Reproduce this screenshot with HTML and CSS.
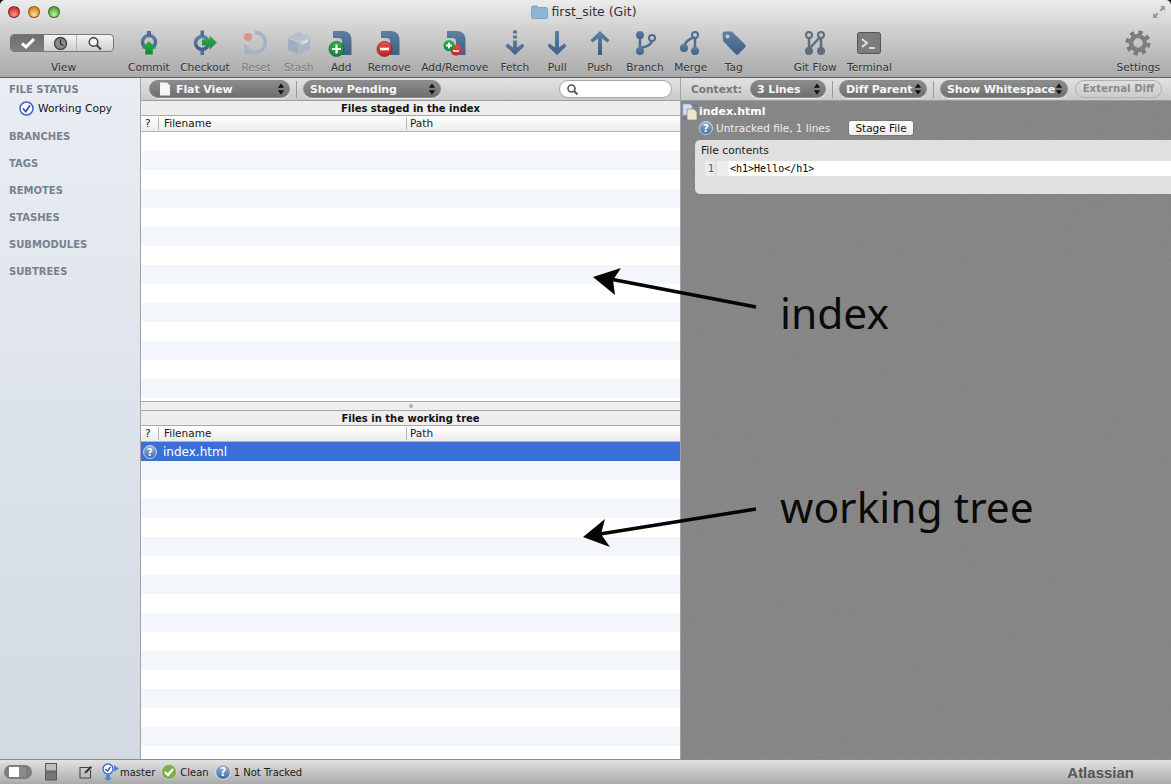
FILE: index.html
```html
<!DOCTYPE html>
<html lang="en">
<head>
  <meta charset="UTF-8">
  <title>first_site (Git)</title>
  <link rel="stylesheet" href="styles.css">
</head>
<body>
  <svg class="defs" width="0" height="0">
    <defs>
      <linearGradient id="slate" x1="0" y1="0" x2="0" y2="1">
        <stop offset="0" stop-color="#5f7fa3"/><stop offset="1" stop-color="#3f5f84"/>
      </linearGradient>
      <linearGradient id="green" x1="0" y1="0" x2="0" y2="1">
        <stop offset="0" stop-color="#2eb04c"/><stop offset="1" stop-color="#0f8a30"/>
      </linearGradient>
      <linearGradient id="red" x1="0" y1="0" x2="0" y2="1">
        <stop offset="0" stop-color="#e8534a"/><stop offset="1" stop-color="#c4201c"/>
      </linearGradient>
      <linearGradient id="badge" x1="0" y1="0" x2="0" y2="1">
        <stop offset="0" stop-color="#9db6d8"/><stop offset="1" stop-color="#3c69a8"/>
      </linearGradient>
      <filter id="grain">
        <feTurbulence type="fractalNoise" baseFrequency="0.9" numOctaves="2"/>
        <feColorMatrix type="saturate" values="0"/>
      </filter>
      <symbol id="updown" viewBox="0 0 8 12">
        <path d="M4 0.5 7.2 4.8H.8zM4 11.5.8 7.2H7.2z" fill="#111"/>
      </symbol>
      <symbol id="question" viewBox="0 0 14 14">
        <circle cx="7" cy="7" r="6.5" fill="url(#badge)" stroke="#dfe6f0" stroke-width="0.8"/>
        <text x="7" y="10.6" text-anchor="middle" font-family="DejaVu Sans" font-weight="700" font-size="10" fill="#fff">?</text>
      </symbol>
      <symbol id="doc" viewBox="0 0 28 28">
        <path d="M6 2H17Q24 3 24.500 10V26H15V12Q15 9 11 9H6z" fill="url(#slate)"/>
      </symbol>
    </defs>
  </svg>

  <div class="window">
    <header class="top">
      <div class="titlebar">
        <div class="lights">
          <span class="light light-red"></span>
          <span class="light light-amber"></span>
          <span class="light light-green"></span>
        </div>
        <div class="title">
          <svg width="17" height="14" viewBox="0 0 17 14"><path d="M.5 2.500Q.5 1 2 1H6L7.500 2.500H15Q16.500 2.500 16.500 4V12.500Q16.500 13.500 15 13.500H2Q.5 13.500.5 12.500z" fill="#8db6d6" stroke="#6d93b3" stroke-width=".7"/></svg>
          first_site (Git)
        </div>
        <svg class="fullscreen" width="14" height="14" viewBox="0 0 14 14"><path d="M8 1H13V6L11.300 4.300 9 6.500 7.500 5 9.700 2.700zM6 13H1V8L2.700 9.700 5 7.500 6.500 9 4.300 11.300z" fill="#9a9a9a"/></svg>
      </div>

      <div class="toolbar">
        <div class="view-tool">
          <div class="segmented">
            <span class="seg seg-on">
              <svg width="18" height="14" viewBox="0 0 18 14"><path d="M3 7.500 7 11 15 3" fill="none" stroke="#fff" stroke-width="3"/></svg>
            </span>
            <span class="seg seg-clock">
              <svg width="15" height="15" viewBox="0 0 15 15"><circle cx="7.500" cy="7.500" r="6" fill="#8a8a8a" stroke="#444" stroke-width="1.400"/><path d="M7.500 3.500V8L10.500 9.500" fill="none" stroke="#333" stroke-width="1.200"/></svg>
            </span>
            <span class="seg seg-search">
              <svg width="16" height="15" viewBox="0 0 16 15"><circle cx="6.500" cy="6" r="4.300" fill="#f4f4f4" stroke="#444" stroke-width="1.500"/><path d="M9.700 9.300 14 13.500" stroke="#444" stroke-width="2.200"/></svg>
            </span>
          </div>
          <span class="tool-label">View</span>
        </div>

        <div class="tool-group">
          <div class="tool">
            <svg class="icon" viewBox="0 0 28 28"><circle cx="14" cy="13" r="6.500" fill="none" stroke="url(#slate)" stroke-width="3.500"/><rect x="12" y="2" width="4" height="6" fill="#4f6f92"/><path d="M14 12 21.500 19.500H17.800V25.500H10.200V19.500H6.500z" fill="url(#green)"/></svg>
            <span class="tool-label">Commit</span>
          </div>
          <div class="tool">
            <svg class="icon" viewBox="0 0 28 28"><circle cx="11" cy="14" r="6.500" fill="none" stroke="url(#slate)" stroke-width="3.500"/><rect x="9.500" y="1.500" width="3.500" height="6" fill="#4f6f92"/><rect x="9.500" y="20.500" width="3.500" height="5.500" fill="#4f6f92"/><path d="M26 13.500 18.500 6.500V10.500H11V16.500H18.500V20.500z" fill="url(#green)"/></svg>
            <span class="tool-label">Checkout</span>
          </div>
          <div class="tool tool-off">
            <svg class="icon" viewBox="0 0 28 28"><path d="M13 3.500A10 10 0 1 1 8 22" fill="none" stroke="#a3b3c4" stroke-width="3.500"/><path d="M2.500 14.500 13 25H2.500z" fill="#a3b3c4"/><circle cx="6" cy="8" r="4" fill="#e08f8c"/></svg>
            <span class="tool-label">Reset</span>
          </div>
          <div class="tool tool-off">
            <svg class="icon" viewBox="0 0 28 28"><path d="M14 3 25 8 14 12.500 3 8z" fill="#b4c1cf"/><path d="M3 9.500 13.500 14V25.500L3 21z" fill="#9eaebf"/><path d="M14.500 14 25 9.500V21L14.500 25.500z" fill="#a8b7c7"/><path d="M16 13 23 10V13L16 16z" fill="#d6dde5"/></svg>
            <span class="tool-label">Stash</span>
          </div>
          <div class="tool">
            <svg class="icon" viewBox="0 0 28 28"><use href="#doc"/><circle cx="9.500" cy="20" r="7.500" fill="url(#green)" stroke="#0a5c20" stroke-width=".7"/><path d="M9.500 15.500V24.500M5 20H14" stroke="#fff" stroke-width="2.200"/></svg>
            <span class="tool-label">Add</span>
          </div>
          <div class="tool">
            <svg class="icon" viewBox="0 0 28 28"><use href="#doc"/><circle cx="9.500" cy="20" r="7.500" fill="url(#red)" stroke="#8a1512" stroke-width=".7"/><path d="M5 20H14" stroke="#fff" stroke-width="2.600"/></svg>
            <span class="tool-label">Remove</span>
          </div>
          <div class="tool">
            <svg class="icon" viewBox="0 0 28 28"><use href="#doc"/><circle cx="15" cy="21" r="5.500" fill="url(#red)"/><path d="M12 22H18" stroke="#fff" stroke-width="1.500"/><circle cx="8" cy="16.500" r="5.500" fill="url(#green)"/><path d="M8 13.500V19.500M5 16.500H11" stroke="#fff" stroke-width="1.800"/></svg>
            <span class="tool-label">Add/Remove</span>
          </div>
          <div class="tool">
            <svg class="icon" viewBox="0 0 28 28"><rect x="12" y="1.500" width="4" height="3" fill="#54749a"/><rect x="12" y="6.500" width="4" height="3" fill="#54749a"/><path d="M12 11.500H16V18.500L21.500 14.500 23.500 17 14 26 4.500 17 6.500 14.500 12 18.500z" fill="url(#slate)"/></svg>
            <span class="tool-label">Fetch</span>
          </div>
          <div class="tool">
            <svg class="icon" viewBox="0 0 28 28"><path d="M12 2H16V18.500L21.500 14.500 23.500 17 14 26 4.500 17 6.500 14.500 12 18.500z" fill="url(#slate)"/></svg>
            <span class="tool-label">Pull</span>
          </div>
          <div class="tool">
            <svg class="icon" viewBox="0 0 28 28"><path d="M12 26H16V9.500L21.500 13.500 23.500 11 14 2 4.500 11 6.500 13.500 12 9.500z" fill="url(#slate)"/></svg>
            <span class="tool-label">Push</span>
          </div>
          <div class="tool">
            <svg class="icon" viewBox="0 0 28 28"><path d="M9 6V21M9 19Q21 17 21 11" fill="none" stroke="#4c6c90" stroke-width="2.500"/><circle cx="9" cy="6" r="4" fill="url(#slate)"/><circle cx="9" cy="22" r="4" fill="url(#slate)"/><circle cx="21" cy="9" r="3" fill="#c9c9c9" stroke="#4c6c90" stroke-width="2"/></svg>
            <span class="tool-label">Branch</span>
          </div>
          <div class="tool">
            <svg class="icon" viewBox="0 0 28 28"><path d="M18 6V21M18 8Q8 11 7 18" fill="none" stroke="#4c6c90" stroke-width="2.500"/><circle cx="18" cy="6" r="3" fill="#c9c9c9" stroke="#4c6c90" stroke-width="2"/><circle cx="18" cy="22" r="4" fill="url(#slate)"/><circle cx="7" cy="19" r="4" fill="url(#slate)"/></svg>
            <span class="tool-label">Merge</span>
          </div>
          <div class="tool">
            <svg class="icon" viewBox="0 0 28 28"><path d="M2.500 5Q2.500 2.500 5 2.500H12L25.500 16 Q26 17 25.500 18L18 25.500Q17 26 16 25.500L3 12z" fill="url(#slate)"/><circle cx="7.500" cy="7.500" r="2" fill="#c8c8c8"/></svg>
            <span class="tool-label">Tag</span>
          </div>
        </div>

        <div class="tool-group tool-group-extra">
          <div class="tool">
            <svg class="icon" viewBox="0 0 28 28"><path d="M8 6V21M20 6V21M9 19 19 8" fill="none" stroke="#5f6d7a" stroke-width="2.500"/><circle cx="8" cy="6" r="3" fill="#c9c9c9" stroke="#5f6d7a" stroke-width="2"/><circle cx="20" cy="6" r="3" fill="#c9c9c9" stroke="#5f6d7a" stroke-width="2"/><circle cx="8" cy="22" r="4" fill="#5f6d7a"/><circle cx="20" cy="22" r="4" fill="#5f6d7a"/></svg>
            <span class="tool-label">Git Flow</span>
          </div>
          <div class="tool">
            <svg class="icon" viewBox="0 0 28 28"><rect x="2.500" y="3.500" width="23" height="21" rx="2" fill="#7c7c7c" stroke="#555"/><path d="M7 10 12 14 7 18" fill="none" stroke="#e6e6e6" stroke-width="1.800"/><path d="M14 19H20" stroke="#e6e6e6" stroke-width="1.800"/></svg>
            <span class="tool-label">Terminal</span>
          </div>
        </div>

        <div class="tool tool-settings">
          <svg class="icon" viewBox="0 0 28 28"><circle cx="14" cy="14" r="10.500" fill="none" stroke="#7a7a7a" stroke-width="4" stroke-dasharray="4.200 4.050"/><circle cx="14" cy="14" r="7" fill="none" stroke="#7e7e7e" stroke-width="4.500"/></svg>
          <span class="tool-label">Settings</span>
        </div>
      </div>
    </header>

    <div class="main">
      <nav class="sidebar">
        <div class="side-head">FILE STATUS</div>
        <div class="side-item">
          <svg width="15" height="15" viewBox="0 0 15 15"><circle cx="7.500" cy="7.500" r="6.500" fill="#fff" stroke="#3f62c8" stroke-width="1.500"/><path d="M4 7.500 6.800 10.500 11 4.500" fill="none" stroke="#2c4fb8" stroke-width="1.800"/></svg>
          Working Copy
        </div>
        <div class="side-head">BRANCHES</div>
        <div class="side-head">TAGS</div>
        <div class="side-head">REMOTES</div>
        <div class="side-head">STASHES</div>
        <div class="side-head">SUBMODULES</div>
        <div class="side-head">SUBTREES</div>
      </nav>

      <section class="files">
        <div class="bar">
          <div class="popup popup-flat">
            <svg width="12" height="14" viewBox="0 0 12 14"><path d="M1 .5H8L11 3.500V13.500H1z" fill="#f4f4f4"/></svg>
            <span class="popup-text">Flat View</span>
            <svg class="updown"><use href="#updown"/></svg>
          </div>
          <span class="bar-sep"></span>
          <div class="popup popup-pending">
            <span class="popup-text">Show Pending</span>
            <svg class="updown"><use href="#updown"/></svg>
          </div>
          <div class="search">
            <svg width="13" height="13" viewBox="0 0 13 13"><circle cx="5.500" cy="5.500" r="3.500" fill="none" stroke="#555" stroke-width="1.600"/><path d="M8 8 11.500 11.500" stroke="#555" stroke-width="2"/></svg>
          </div>
        </div>

        <div class="list list-index">
          <div class="list-title">Files staged in the index</div>
          <div class="cols">
            <span class="col col-q">?</span>
            <span class="col col-name">Filename</span>
            <span class="col col-path">Path</span>
          </div>
          <div class="rows"></div>
        </div>

        <div class="splitter"><span class="splitter-dot"></span></div>

        <div class="list list-tree">
          <div class="list-title">Files in the working tree</div>
          <div class="cols">
            <span class="col col-q">?</span>
            <span class="col col-name">Filename</span>
            <span class="col col-path">Path</span>
          </div>
          <div class="rows">
            <div class="row-selected">
              <svg width="14" height="14"><use href="#question"/></svg>
              index.html
            </div>
          </div>
        </div>
      </section>

      <section class="diff">
        <div class="bar bar-diff">
          <span class="context">Context:</span>
          <div class="popup popup-lines">
            <span class="popup-text">3 Lines</span>
            <svg class="updown"><use href="#updown"/></svg>
          </div>
          <span class="bar-sep"></span>
          <div class="popup popup-parent">
            <span class="popup-text">Diff Parent</span>
            <svg class="updown"><use href="#updown"/></svg>
          </div>
          <span class="bar-sep"></span>
          <div class="popup popup-white">
            <span class="popup-text">Show Whitespace</span>
            <svg class="updown"><use href="#updown"/></svg>
          </div>
          <span class="external">External Diff</span>
        </div>

        <div class="diff-body">
          <svg class="grain" width="100%" height="100%"><rect width="100%" height="100%" filter="url(#grain)"/></svg>
          <div class="file-name">
            <svg width="16" height="18" viewBox="0 0 16 18"><path d="M1 1H8L10 3V12H1z" fill="#cfe0f2" stroke="#8fb0d4" stroke-width=".7"/><path d="M5 6H12L15 9V17H5z" fill="#efe6d2" stroke="#8a7f68" stroke-width=".7"/><path d="M11 2H14V4M2 14V16H4" fill="none" stroke="#3b6ad0" stroke-width="1"/></svg>
            index.html
          </div>
          <div class="file-meta">
            <svg width="14" height="14"><use href="#question"/></svg>
            <span class="meta-text">Untracked file, 1 lines</span>
            <button class="stage">Stage File</button>
          </div>
          <div class="contents">
            <div class="contents-title">File contents</div>
            <div class="code-row">
              <span class="gutter">1</span>
              <span class="gutter gutter-empty"></span>
              <code class="code">&lt;h1&gt;Hello&lt;/h1&gt;</code>
            </div>
          </div>
        </div>
      </section>
    </div>

    <footer class="status">
      <span class="toggle"><span class="toggle-on"></span></span>
      <svg class="panes" width="12" height="18" viewBox="0 0 12 18"><rect x=".5" y=".5" width="11" height="7.500" fill="#bdbdbd" stroke="#555"/><rect x=".5" y="9" width="11" height="8" fill="#777" stroke="#555"/></svg>
      <svg class="compose" width="14" height="14" viewBox="0 0 14 14"><path d="M10 2.500H1V13H11.500V5" fill="none" stroke="#444" stroke-width="1.100"/><path d="M5.500 8.500 6 6.500 11.500 1 13 2.500 7.500 8z" fill="#333"/></svg>
      <svg class="branch-ico" width="18" height="18" viewBox="0 0 18 18"><path d="M13 2 18 5.500 13 9zM5 12H9V15H11L7 18 3 15H5z" fill="#3f8fd2"/><circle cx="7" cy="6" r="5" fill="#fff" stroke="#3f62c8" stroke-width="1.300"/><path d="M4.500 6 6.500 8 9.500 4" fill="none" stroke="#2c4fb8" stroke-width="1.400"/></svg>
      <span class="status-text">master</span>
      <svg class="status-ico" width="16" height="16" viewBox="0 0 16 16"><circle cx="8" cy="8" r="7.500" fill="#7fae4e" stroke="#dfe8d0" stroke-width=".6"/><path d="M4 8 7 11 12 5" fill="none" stroke="#fff" stroke-width="2.200"/></svg>
      <span class="status-text">Clean</span>
      <svg class="status-ico" width="16" height="16"><use href="#question"/></svg>
      <span class="status-text">1 Not Tracked</span>
      <span class="brand">Atlassian</span>
    </footer>

    <svg class="arrows" width="1171" height="784">
      <path d="M756 307 610 279" stroke="#050505" stroke-width="3.500"/>
      <path d="M593 277 621 268 613 280 615 295z" fill="#050505"/>
      <path d="M756 509 600 534" stroke="#050505" stroke-width="3.500"/>
      <path d="M583 537 605 519 601 534 610 547z" fill="#050505"/>
    </svg>
    <span class="note note-index">index</span>
    <span class="note note-tree">working tree</span>
  </div>
</body>
</html>
```

FILE: styles.css
```css
* {
  box-sizing: border-box;
}
html, body {
  margin: 0;
  height: 100%;
}
body {
  background: #111;
  font-family: "DejaVu Sans", sans-serif;
  font-size: 10.7px;
  color: #1a1a1a;
  overflow: hidden;
}
.defs {
  position: absolute;
}
.window {
  position: relative;
  width: 1171px;
  height: 784px;
  display: flex;
  flex-direction: column;
  border-radius: 5px 5px 0 0;
  overflow: hidden;
}

/* title bar and toolbar */
.top {
  height: 78px;
  flex: none;
  background: linear-gradient(#ececec, #d6d6d6 30%, #a9a9a9);
  border-bottom: 1px solid #5e5e5e;
}
.titlebar {
  height: 24px;
  display: grid;
  grid-template-columns: 1fr auto 1fr;
  align-items: center;
  padding: 0 5px 1px 8px;
}
.lights {
  display: flex;
  gap: 8px;
}
.light {
  width: 12px;
  height: 12px;
  border-radius: 50%;
  border: 1px solid rgba(0, 0, 0, 0.45);
}
.light-red {
  background: radial-gradient(circle at 50% 75%, #ff9a90, #d8312c 70%);
}
.light-amber {
  background: radial-gradient(circle at 50% 75%, #ffdf90, #d98c1e 70%);
}
.light-green {
  background: radial-gradient(circle at 50% 75%, #c4f0a0, #56a83a 70%);
}
.title {
  display: flex;
  align-items: center;
  gap: 3px;
  margin-right: 6px;
  font-size: 12.5px;
  color: #333;
}
.fullscreen {
  justify-self: end;
}
.toolbar {
  height: 53px;
  display: flex;
  padding: 5px 11px 0 10px;
}
.view-tool {
  width: 104px;
  margin-right: 14px;
  display: flex;
  flex-direction: column;
  align-items: center;
}
.view-tool .tool-label {
  padding-left: 3px;
}
.segmented {
  width: 104px;
  height: 18px;
  margin-top: 5px;
  margin-bottom: 9px;
  display: flex;
  border: 1px solid #777;
  border-radius: 4px;
  background: linear-gradient(#f4f4f4, #cfcfcf);
  overflow: hidden;
}
.seg {
  display: flex;
  align-items: center;
  justify-content: center;
}
.seg-on {
  width: 33px;
  background: linear-gradient(#6e6e6e, #7f7f7f);
}
.seg-clock {
  width: 33px;
  border-right: 1px solid #b0b0b0;
}
.seg-search {
  flex: 1;
}
.tool-group {
  display: flex;
  gap: 10.5px;
}
.tool-group-extra {
  margin-left: 44px;
}
.tool {
  min-width: 32px;
  display: flex;
  flex-direction: column;
  align-items: center;
}
.icon {
  width: 28px;
  height: 28px;
  margin-bottom: 4px;
}
.tool-label {
  font-size: 10.6px;
  line-height: 12px;
  color: #333;
  white-space: nowrap;
  text-shadow: 0 1px 0 rgba(255, 255, 255, 0.3);
}
.tool-off .tool-label {
  color: #7a7a7a;
}
.tool-settings {
  margin-left: auto;
}

/* main area */
.main {
  flex: 1;
  display: flex;
  min-height: 0;
}
.sidebar {
  width: 141px;
  flex: none;
  padding-top: 5px;
  background: linear-gradient(#e9edf3, #d2d9e2);
  border-right: 1px solid #a2a2a2;
}
.side-head {
  height: 27px;
  padding-left: 9px;
  line-height: 14px;
  font-size: 10px;
  font-weight: 700;
  color: #76818f;
}
.side-head:first-child {
  height: 19px;
}
.side-item {
  height: 29px;
  margin-top: -1px;
  padding-left: 19px;
  display: flex;
  align-items: flex-start;
  gap: 4px;
  line-height: 15px;
  color: #111;
}
.files {
  width: 540px;
  flex: none;
  display: flex;
  flex-direction: column;
  border-right: 1px solid #a2a2a2;
}
.bar {
  height: 23px;
  flex: none;
  display: flex;
  align-items: center;
  padding: 1px 8px;
  background: linear-gradient(#e2e2e2, #c9c9c9);
  border-bottom: 1px solid #9c9c9c;
}
.popup {
  height: 18px;
  display: flex;
  align-items: center;
  padding: 0 4px 0 6px;
  border-radius: 9px;
  background: linear-gradient(#8c8c8c, #6f6f6f);
  border: 1px solid #8a8a8a;
  box-shadow: 0 1px 0 #eee;
}
.popup-text {
  flex: 1;
  font-size: 11px;
  font-weight: 700;
  letter-spacing: -0.1px;
  color: #f6f6f6;
  white-space: nowrap;
}
.updown {
  width: 8px;
  height: 12px;
  flex: none;
}
.popup-flat {
  width: 141px;
  padding-left: 9px;
  gap: 5px;
}
.popup-pending {
  width: 138px;
}
.bar-sep {
  width: 1px;
  height: 17px;
  margin: 0 6px;
  background: #9a9a9a;
}
.search {
  width: 113px;
  height: 18px;
  margin-left: auto;
  padding-left: 6px;
  display: flex;
  align-items: center;
  background: #fff;
  border: 1px solid #a6a6a6;
  border-radius: 9px;
}
.list {
  display: flex;
  flex-direction: column;
  min-height: 0;
}
.list-index {
  height: 300px;
}
.list-tree {
  flex: 1;
}
.list-title {
  height: 15px;
  flex: none;
  text-align: center;
  font-size: 10px;
  font-weight: 700;
  line-height: 16px;
  color: #111;
  background: #eeeeee;
  border-bottom: 1px solid #a9a9a9;
}
.cols {
  height: 16px;
  flex: none;
  display: flex;
  align-items: center;
  background: linear-gradient(#ffffff, #ececec);
  border-bottom: 1px solid #b5b5b5;
}
.col {
  height: 13px;
  font-size: 10.5px;
  line-height: 13px;
}
.col-q {
  width: 18px;
  padding-left: 4px;
  border-right: 1px solid #b9b9b9;
}
.col-name {
  width: 248px;
  padding-left: 5px;
  border-right: 1px solid #b9b9b9;
}
.col-path {
  padding-left: 3px;
}
.rows {
  flex: 1;
  background: repeating-linear-gradient(#fff 0, #fff 19px, #f3f6fb 19px, #f3f6fb 38px);
}
.row-selected {
  height: 19px;
  display: flex;
  align-items: center;
  gap: 6px;
  padding-left: 2px;
  font-size: 12px;
  color: #fff;
  background: #3a70d6;
}
.splitter {
  height: 10px;
  flex: none;
  display: flex;
  align-items: center;
  justify-content: center;
  background: #efefef;
  border-top: 1px solid #a9a9a9;
  border-bottom: 1px solid #a9a9a9;
}
.splitter-dot {
  width: 4px;
  height: 4px;
  border-radius: 50%;
  background: #c2c2c2;
  border: 1px solid #aaa;
}

/* diff pane */
.diff {
  flex: 1;
  display: flex;
  flex-direction: column;
  min-width: 0;
}
.bar-diff {
  padding-left: 10px;
}
.context {
  width: 51px;
  margin-right: 8px;
  font-size: 10.6px;
  font-weight: 700;
  color: #777;
}
.popup-lines {
  width: 76px;
}
.popup-parent {
  width: 88px;
}
.popup-white {
  width: 128px;
}
.external {
  width: 87px;
  height: 18px;
  margin-left: 7px;
  text-align: center;
  font-size: 10.2px;
  font-weight: 700;
  line-height: 16px;
  color: #8a8a8a;
  border: 1px solid #b0b0b0;
  border-radius: 9px;
  white-space: nowrap;
}
.diff-body {
  flex: 1;
  position: relative;
  background: #828282;
  overflow: hidden;
}
.grain {
  position: absolute;
  inset: 0;
  opacity: 0.16;
}
.file-name {
  position: relative;
  height: 17px;
  padding: 2px 0 0 1px;
  display: flex;
  gap: 1px;
  font-size: 11px;
  font-weight: 700;
  line-height: 17px;
  color: #fff;
}
.file-meta {
  position: relative;
  height: 20px;
  padding-left: 18px;
  display: flex;
  align-items: center;
  gap: 3px;
}
.meta-text {
  width: 129px;
  font-size: 10.5px;
  color: #eee;
}
.stage {
  width: 66px;
  height: 16px;
  padding: 0;
  font-family: inherit;
  font-size: 10.5px;
  color: #111;
  background: linear-gradient(#fff, #ececec);
  border: 1px solid #777;
  border-radius: 3px;
}
.contents {
  position: relative;
  height: 54px;
  margin: 2px 0 0 14px;
  background: #e0e0e0;
  border-radius: 5px 0 0 5px;
}
.contents-title {
  height: 21px;
  padding-left: 6px;
  font-size: 10.7px;
  line-height: 21px;
}
.code-row {
  height: 15px;
  display: flex;
  background: #fff;
  line-height: 15px;
}
.gutter {
  width: 13px;
  font-size: 10px;
  color: #555;
  background: #ececec;
}
.gutter:first-child {
  width: 19px;
  padding-left: 13px;
  background: linear-gradient(90deg, #e0e0e0 10px, #ececec 10px);
}
.gutter-empty {
  width: 14px;
  border-left: 3px solid #e0e0e0;
}
.code {
  margin-left: 2px;
  font-family: "DejaVu Sans Mono", monospace;
  font-size: 10px;
  color: #000;
}

/* status bar */
.status {
  height: 25px;
  flex: none;
  display: flex;
  align-items: center;
  padding: 0 37px 0 4px;
  background: linear-gradient(#e2e2e2, #aaaaaa);
  border-top: 1px solid #8a8a8a;
}
.toggle {
  width: 28px;
  height: 14px;
  margin-right: 13px;
  padding: 2px 5px;
  border-radius: 7px;
  background: #7d7d7d;
}
.toggle-on {
  display: block;
  width: 17px;
  height: 10px;
  background: linear-gradient(90deg, #fff 60%, #8b8b8b 60%);
}
.panes {
  margin-right: 22px;
}
.compose {
  margin-right: 8px;
}
.branch-ico {
  margin-right: 1px;
}
.status-ico {
  margin: 0 3px 0 6px;
}
.status-text {
  font-size: 10px;
  color: #1a1a1a;
}
.brand {
  margin-left: auto;
  font-family: "Liberation Sans", sans-serif;
  font-size: 15px;
  font-weight: 700;
  color: #555;
}

/* annotations drawn over the app */
.arrows {
  position: absolute;
  left: 0;
  top: 0;
  pointer-events: none;
}
.note {
  position: absolute;
  left: 780px;
  font-family: "Noto Sans", sans-serif;
  font-size: 42.5px;
  line-height: 50px;
  color: #0a0a0a;
  white-space: nowrap;
}
.note-index {
  top: 288px;
}
.note-tree {
  top: 482px;
}
```
